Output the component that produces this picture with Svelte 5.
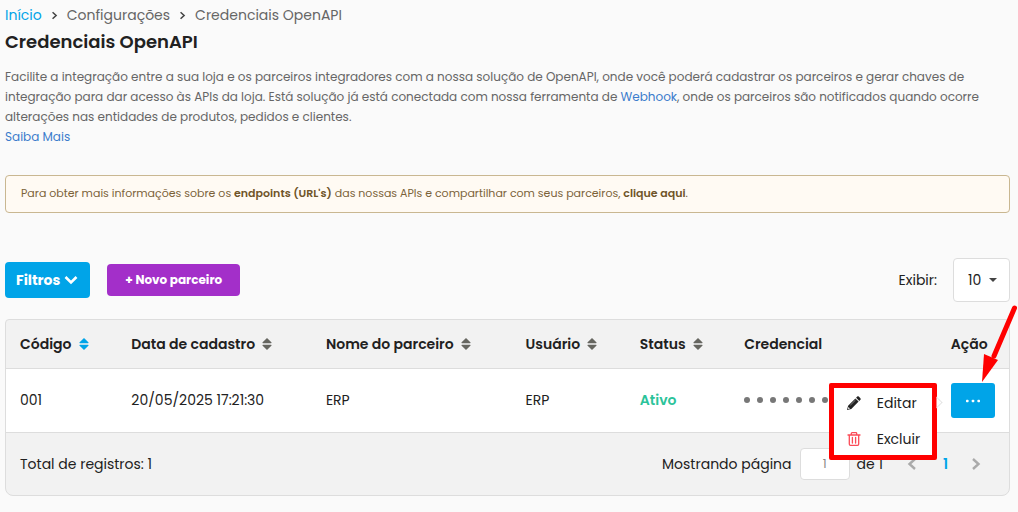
<script>
  const columns = [
    { key: 'codigo', label: 'Código', sortable: true, active: true },
    { key: 'data', label: 'Data de cadastro', sortable: true },
    { key: 'nome', label: 'Nome do parceiro', sortable: true },
    { key: 'usuario', label: 'Usuário', sortable: true },
    { key: 'status', label: 'Status', sortable: true },
    { key: 'credencial', label: 'Credencial' },
    { key: 'acao', label: 'Ação' }
  ];
  const rows = [
    { codigo: '001', data: '20/05/2025 17:21:30', nome: 'ERP', usuario: 'ERP', status: 'Ativo' }
  ];
  const mask = Array.from({ length: 12 });
  let page = $state('1');
</script>

{#snippet chevron(cls, d)}
  <svg class={cls} viewBox="0 0 10 14" aria-hidden="true">
    <path {d} fill="none" stroke="currentColor" stroke-width="2.4" />
  </svg>
{/snippet}

<main>
  <nav class="crumbs">
    <a href="#inicio">Início</a>
    {@render chevron('sep', 'M2 2 L7.5 7 L2 12')}
    <span>Configurações</span>
    {@render chevron('sep', 'M2 2 L7.5 7 L2 12')}
    <span>Credenciais OpenAPI</span>
  </nav>
  <h1>Credenciais OpenAPI</h1>
  <p class="intro">
    Facilite a integração entre a sua loja e os parceiros integradores com a nossa solução de OpenAPI, onde você poderá cadastrar os parceiros e gerar chaves de<br />
    integração para dar acesso às APIs da loja. Está solução já está conectada com nossa ferramenta de <a href="#webhook">Webhook</a>, onde os parceiros são notificados quando ocorre<br />
    alterações nas entidades de produtos, pedidos e clientes.<br />
    <a href="#saiba-mais">Saiba Mais</a>
  </p>

  <p class="notice">
    Para obter mais informações sobre os <b>endpoints (URL's)</b> das nossas APIs e compartilhar com seus parceiros, <a href="#endpoints">clique aqui</a>.
  </p>

  <div class="toolbar">
    <button class="filters">
      Filtros
      <svg viewBox="0 0 14 10" aria-hidden="true"><path d="M1.5 2 L7 7.5 L12.5 2" fill="none" stroke="currentColor" stroke-width="2.6" /></svg>
    </button>
    <button class="new">+ Novo parceiro</button>
    <label for="limit">Exibir:</label>
    <div class="select">
      <select id="limit"><option>10</option><option>25</option><option>50</option></select>
      <svg viewBox="0 0 8 4" aria-hidden="true"><path d="M0 0 H8 L4 4 Z" fill="currentColor" /></svg>
    </div>
  </div>

  <section class="grid">
    <table>
      <colgroup>
        {#each columns as c}<col class={c.key} />{/each}
      </colgroup>
      <thead>
        <tr>
          {#each columns as c}
            <th scope="col">
              {#if c.sortable}
                <button class="sort" class:active={c.active}>
                  {c.label}
                  <svg viewBox="0 0 10 12" aria-hidden="true"><path d="M5 0 L9.6 4.6 Q9.6 5.2 9 5.2 H1 Q.4 5.2 .4 4.6 Z M5 12 L9.6 7.4 Q9.6 6.8 9 6.8 H1 Q.4 6.8 .4 7.4 Z" fill="currentColor" /></svg>
                </button>
              {:else}{c.label}{/if}
            </th>
          {/each}
        </tr>
      </thead>
      <tbody>
        {#each rows as r}
          <tr>
            <td>{r.codigo}</td>
            <td>{r.data}</td>
            <td>{r.nome}</td>
            <td>{r.usuario}</td>
            <td class="on">{r.status}</td>
            <td><div class="mask">{#each mask as _}<i></i>{/each}</div></td>
            <td class="actions">
              <div class="action">
                <button class="more" aria-label="Ações">
                  <svg viewBox="0 0 14 4" aria-hidden="true"><g fill="currentColor"><rect x="0" y=".7" width="2.6" height="2.6" rx=".8" /><rect x="5.7" y=".7" width="2.6" height="2.6" rx=".8" /><rect x="11.4" y=".7" width="2.6" height="2.6" rx=".8" /></g></svg>
                </button>
                <div class="menu">
                  <button>
                    <svg viewBox="0 0 14 14" aria-hidden="true"><path d="M9.1 1.7 L10.2 .6 Q11 -.1 11.8 .6 L13.4 2.2 Q14.1 3 13.4 3.8 L12.3 4.9 Z M8.4 2.4 L11.6 5.6 L4.3 12.9 L0 14 L1.1 9.7 Z" fill="#222" /><path d="M3.3 9.2 L8.5 4" stroke="#aaa" stroke-width=".7" /><path d="M1.4 11 L3 12.6 L1.3 13 L1 12.7 Z" fill="#fff" /></svg>
                    Editar
                  </button>
                  <button>
                    <svg viewBox="0 0 14 14" aria-hidden="true"><path d="M1 3 H13 M4.3 3 V1.5 Q4.3 .7 5.1 .7 H8.9 Q9.7 .7 9.7 1.5 V3 M2.3 3 V12.1 Q2.3 13.3 3.5 13.3 H10.5 Q11.7 13.3 11.7 12.1 V3 M5.4 5.4 V11 M8.6 5.4 V11" fill="none" stroke="#fb4b57" stroke-width="1.3" stroke-linecap="round" /></svg>
                    Excluir
                  </button>
                </div>
                <svg class="pointer" viewBox="0 0 40 80" aria-hidden="true"><path d="M34.5 5 L14 53" stroke="#f00" stroke-width="5" stroke-linecap="round" /><path d="M2 79 L4 51 L18 57 Z" fill="#f00" /></svg>
              </div>
            </td>
          </tr>
        {/each}
      </tbody>
    </table>
    <footer>
      <span class="total">Total de registros: 1</span>
      <label for="page">Mostrando página</label>
      <input id="page" bind:value={page} />
      <span class="of">de 1</span>
      <button class="step" aria-label="Página anterior">{@render chevron('step-icon', 'M8 2 L2.5 7 L8 12')}</button>
      <a class="current" href="#1">1</a>
      <button class="step" aria-label="Próxima página">{@render chevron('step-icon', 'M2 2 L7.5 7 L2 12')}</button>
    </footer>
  </section>
</main>

<style>
  :global(body) { background: #fafafa; }
  main {
    box-sizing: border-box;
    padding: 5px 8px 16px 5px;
    font: 14px/20px Poppins, Inter, sans-serif;
    color: #212121;
  }
  button, input, select { font: inherit; color: inherit; }
  button { border: 0; padding: 0; background: none; cursor: pointer; }
  a { text-decoration: none; }
  svg { display: block; flex: none; }

  .crumbs { display: flex; align-items: center; color: #666; }
  .crumbs a { color: #00a4e8; }
  .crumbs :global(.sep) { width: 7px; height: 9px; margin: 0 9px; color: #444; }
  h1 { margin: 4px 0 12px; font-size: 18px; line-height: 26px; font-weight: 600; }
  .intro { margin: 0; font-size: 12px; color: #666; white-space: nowrap; }
  .intro a { color: #3b7ccc; }
  .notice {
    margin: 28px 0 45px;
    padding: 7px 15px 9px;
    border: 1px solid #c9b791;
    border-radius: 4px;
    background: #fffaf3;
    color: #7b6239;
    font-size: 11px;
  }
  .notice b, .notice a { font-weight: 600; color: #6f5428; }

  .toolbar { display: flex; align-items: center; margin-bottom: 17px; }
  .toolbar button { border-radius: 4px; color: #fff; font-weight: 700; }
  .filters { display: flex; align-items: center; gap: 4px; height: 36px; padding: 0 12px 0 11px; background: #00a4e8; }
  .filters svg { width: 14px; height: 10px; }
  .toolbar .new { height: 32px; margin-left: 17px; padding: 0 18px; background: #a32fc9; font-size: 12px; }
  .toolbar label { margin-left: auto; margin-right: 16px; }
  .select { position: relative; }
  select {
    width: 57px; height: 44px; padding: 0 14px;
    border: 1px solid #ddd; border-radius: 4px; background: #fff; appearance: none;
  }
  .select svg { position: absolute; right: 13px; top: 20px; width: 8px; height: 4px; color: #444; pointer-events: none; }

  .grid { border: 1px solid #ddd; border-radius: 4px 4px 8px 8px; background: #f2f2f2; }
  table { width: 100%; table-layout: fixed; border-collapse: collapse; }
  col.codigo { width: 11.1%; }
  col.data { width: 19.4%; }
  col.nome { width: 19.9%; }
  col.usuario { width: 11.4%; }
  col.status { width: 10.4%; }
  col.credencial { width: 20.6%; }
  col.acao { width: 7.2%; }
  th, td { padding: 0 0 0 14px; text-align: left; white-space: nowrap; border-bottom: 1px solid #ddd; }
  th { height: 48px; font-weight: 600; }
  td { height: 61px; padding-bottom: 2px; background: #fff; }
  .actions { height: 63px; padding-bottom: 0; }
  .sort { display: flex; align-items: center; gap: 7px; font-weight: 600; }
  .sort svg { width: 10px; height: 12px; color: #666660; }
  .sort.active svg { color: #00a4e8; }
  .on { color: #2bc39a; font-weight: 600; }
  .mask { display: flex; gap: 7px; }
  .mask i { flex: none; width: 6px; height: 6px; border-radius: 50%; background: #777; }

  .action { position: relative; width: 44px; }
  .more { display: flex; align-items: center; justify-content: center; width: 44px; height: 35px; border-radius: 3px; background: #00a4e8; color: #fff; }
  .more svg { width: 14px; height: 4px; }
  .menu {
    position: absolute; z-index: 1; top: 0; right: calc(100% + 14px);
    box-sizing: border-box; width: 108px; padding: 0 13px;
    border: 5px solid #f00; border-radius: 2px; background: #fff;
  }
  .menu::after {
    content: ''; position: absolute; right: -9px; top: 10px;
    width: 8px; height: 8px; border: solid #ddd; border-width: 1px 1px 0 0;
    background: #fff; transform: rotate(45deg); z-index: -1;
    clip-path: polygon(0 0, 100% 0, 100% 100%);
  }
  .menu button { display: flex; align-items: center; gap: 16px; height: 30px; }
  .menu button + button { height: 37px; padding-top: 4px; }
  .menu svg { width: 14px; height: 14px; }
  .pointer { position: absolute; left: 29px; top: -80px; width: 40px; height: 80px; z-index: 2; pointer-events: none; }

  footer { display: flex; align-items: center; height: 62px; padding: 0 28px 0 14px; }
  .total { margin-right: auto; }
  input {
    box-sizing: border-box; width: 50px; height: 32px; margin: 0 7px 0 8px; padding: 0;
    border: 1px solid #ddd; border-radius: 4px; background: #fff;
    text-align: center; font-size: 12px; color: #888;
  }
  .of { margin-right: 24px; }
  .step { color: #aaa; }
  .step :global(.step-icon) { width: 10px; height: 14px; }
  .current { margin: 0 23px 0 26px; color: #00a4e8; font-weight: 600; }
</style>
